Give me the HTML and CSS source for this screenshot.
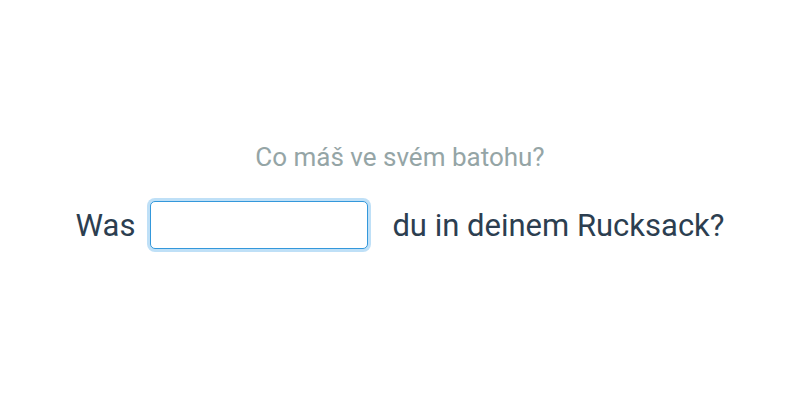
FILE: index.html
```html
<!DOCTYPE html>
<html>
<head>
<meta charset="utf-8">
<link rel="stylesheet" href="styles.css">
</head>
<body>
<main class="page">
  <p class="hint">Co máš ve svém batohu?</p>
  <div class="sentence">
    <span class="word">Was</span>
    <input class="blank" type="text" aria-label="answer">
    <span class="word rest">du in deinem Rucksack?</span>
  </div>
</main>
</body>
</html>
```
FILE: styles.css
```css
html, body {
  margin: 0;
  padding: 0;
  background: #ffffff;
}
.page {
  width: 800px;
  height: 400px;
  display: flex;
  flex-direction: column;
  align-items: center;
  justify-content: flex-start;
  font-family: Roboto, "Noto Sans", sans-serif;
}
.hint {
  margin: 141px 0 0 0;
  font-size: 26px;
  line-height: 32px;
  color: #95a5a6;
}
.sentence {
  margin-top: 28px;
  display: flex;
  align-items: center;
  color: #2c3e50;
  font-size: 31px;
}
.blank {
  box-sizing: border-box;
  width: 218px;
  height: 48px;
  margin: 0 24px 0 15px;
  border: 1px solid #3498db;
  border-radius: 5px;
  box-shadow: 0 0 0 3px #bfe0f7;
  outline: none;
  background: #fff;
  font: inherit;
}
```
